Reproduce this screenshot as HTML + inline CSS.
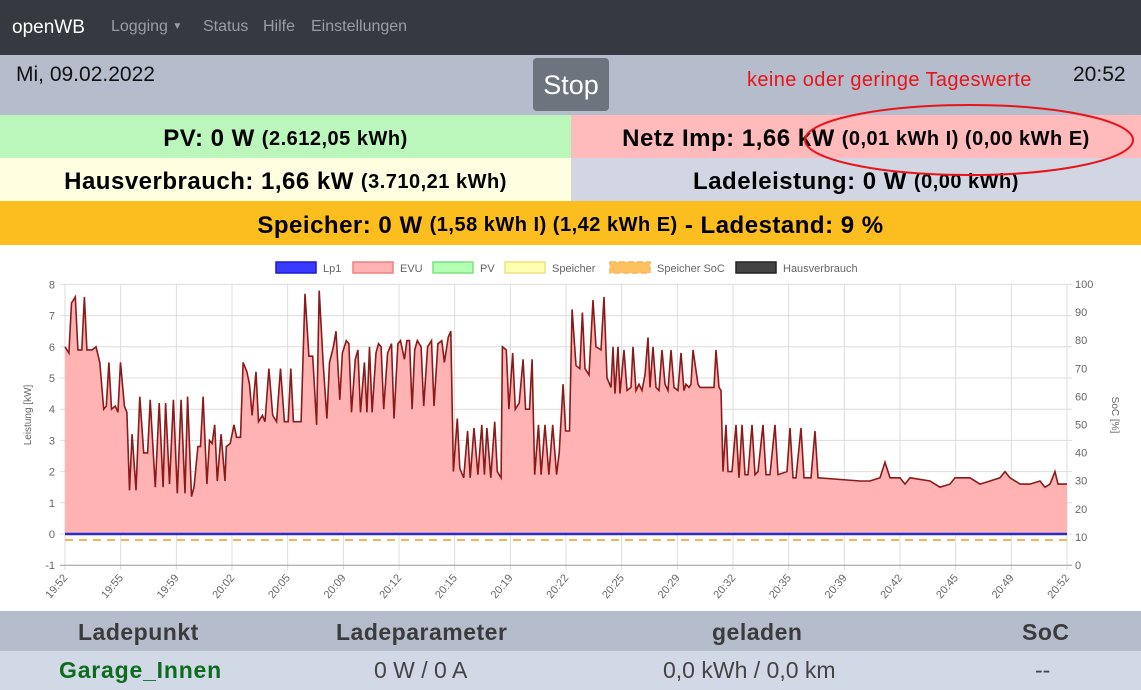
<!DOCTYPE html>
<html><head><meta charset="utf-8"><style>
*{margin:0;padding:0;box-sizing:border-box}
body{width:1141px;height:690px;overflow:hidden;font-family:"Liberation Sans",sans-serif;background:#fff;position:relative}
.nav{position:absolute;left:0;top:0;width:1141px;height:55px;background:#343a40;color:#fff}
.nav span{position:absolute;top:18px;font-size:16px}
.r{position:absolute;display:flex;align-items:center;justify-content:center;font-weight:bold;font-size:24px;letter-spacing:0.5px;color:#000;padding-top:5px}
.r small{font-size:20px;margin-left:7px}
</style></head><body>
<div class="nav">
<span style="left:12px;font-size:19px;top:17px">openWB</span>
<span style="left:111px;color:#9a9da1">Logging <span style="position:static;font-size:10px;vertical-align:2px">▼</span></span>
<span style="left:203px;color:#9a9da1">Status</span>
<span style="left:263px;color:#9a9da1">Hilfe</span>
<span style="left:311px;color:#9a9da1">Einstellungen</span>
</div>
<div style="position:absolute;left:0;top:55px;width:1141px;height:60px;background:#b5bccb"></div>
<div style="position:absolute;left:16px;top:63px;font-size:21px;color:#111">Mi, 09.02.2022</div>
<div style="position:absolute;left:533px;top:58px;width:76px;height:53px;background:#6c757d;border-radius:4px;color:#fff;font-size:27px;text-align:center;line-height:55px">Stop</div>
<div style="position:absolute;left:747px;top:69px;font-size:20px;color:#e8141b;letter-spacing:0.4px">keine oder geringe Tageswerte</div>
<div style="position:absolute;left:1073px;top:63px;font-size:21px;color:#111">20:52</div>
<div class="r" style="left:0;top:115px;width:571px;height:43px;background:#bbf7bb">PV: 0 W<small>(2.612,05 kWh)</small></div>
<div class="r" style="left:571px;top:115px;width:570px;height:43px;background:#ffbbbb">Netz Imp: 1,66 kW<small>(0,01 kWh I) (0,00 kWh E)</small></div>
<div class="r" style="left:0;top:158px;width:571px;height:43px;background:#fefee0">Hausverbrauch: 1,66 kW<small>(3.710,21 kWh)</small></div>
<div class="r" style="left:571px;top:158px;width:570px;height:43px;background:#d2d6e2">Ladeleistung: 0 W<small>(0,00 kWh)</small></div>
<div class="r" style="left:0;top:201px;width:1141px;height:44px;background:#fcbe1f">Speicher: 0 W<small>(1,58 kWh I) (1,42 kWh E)</small>&nbsp;- Ladestand: 9 %</div>
<svg style="position:absolute;left:0;top:0" width="1141" height="690">
<ellipse cx="969" cy="140" rx="164" ry="35" fill="none" stroke="#e8141b" stroke-width="2"/>
</svg>
<svg id="ch" style="position:absolute;left:0;top:245px" width="1141" height="365" font-family="Liberation Sans" font-size="11" fill="#666"></svg>
<div style="position:absolute;left:0;top:611px;width:1141px;height:40px;background:#b5bccb;font-weight:bold;font-size:23px;color:#3b3b3b;letter-spacing:0.5px">
<span style="position:absolute;left:78px;top:8px">Ladepunkt</span>
<span style="position:absolute;left:336px;top:8px">Ladeparameter</span>
<span style="position:absolute;left:712px;top:8px">geladen</span>
<span style="position:absolute;left:1022px;top:8px">SoC</span></div>
<div style="position:absolute;left:0;top:651px;width:1141px;height:39px;background:#d2d9e6;font-size:23px;color:#444">
<span style="position:absolute;left:59px;top:6px;font-weight:bold;color:#0d6b1e;letter-spacing:0.8px">Garage_Innen</span>
<span style="position:absolute;left:374px;top:6px">0 W / 0 A</span>
<span style="position:absolute;left:663px;top:6px">0,0 kWh / 0,0 km</span>
<span style="position:absolute;left:1035px;top:6px">--</span></div>
<script>
var s=document.getElementById('ch'),h='';
var X0=65,X1=1067,Y=function(v){return 289-31.2*v};
var TL=['19:52','19:55','19:59','20:02','20:05','20:09','20:12','20:15','20:19','20:22','20:25','20:29','20:32','20:35','20:39','20:42','20:45','20:49','20:52'];
for(var i=0;i<=18;i++){var x=X0+i*(X1-X0)/18;h+='<line x1="'+x+'" y1="39" x2="'+x+'" y2="325" stroke="#ddd"/>';
 h+='<text transform="translate('+(x+3)+',333) rotate(-50)" text-anchor="end">'+TL[i]+'</text>';}
for(var v=-1;v<=8;v++){var y=Y(v);h+='<line x1="60" y1="'+y+'" x2="1072" y2="'+y+'" stroke="'+(v==-1?'#999':'#ddd')+'"/><text x="55" y="'+(y+4)+'" text-anchor="end">'+v+'</text>';}
for(var k=0;k<=10;k++){var y=320-k*28.1;h+='<text x="1075" y="'+(y+4)+'">'+(k*10)+'</text>';}
var K=[[65,6],[68,5.8],[70,7.4],[73,7.6],[75,5.9],[78,5.9],[80,7.6],[82,5.9],[86,5.9],[89,6.0],[92,5.5],[95,4.0],[97,4.1],[99,5.5],[101,4.0],[104,4.1],[106,3.9],[108,5.5],[111,4.1],[113,3.9],[115,1.4],[117,3.2],[120,1.4],[123,4.4],[126,2.6],[129,2.6],[131,4.3],[135,1.5],[138,4.2],[141,1.5],[143,4.2],[146,1.6],[149,4.3],[152,1.3],[155,4.3],[158,1.3],[160,4.4],[163,1.2],[165,1.5],[168,2.8],[170,2.8],[172,4.4],[175,1.6],[177,3.0],[179,2.9],[181,3.5],[183,1.7],[186,3.2],[189,1.7],[190,2.8],[193,2.9],[196,3.5],[198,3.1],[201,3.1],[203,5.5],[206,5.2],[208,4.8],[210,3.8],[213,5.2],[215,3.6],[218,3.8],[220,3.6],[223,5.3],[226,3.8],[229,3.6],[232,5.3],[235,3.6],[238,3.6],[240,5.3],[242,3.6],[246,3.6],[248,3.6],[251,7.7],[254,5.7],[257,5.7],[260,3.5],[262,7.8],[265,5.5],[268,3.7],[270,5.5],[273,6.0],[275,6.5],[278,4.3],[280,5.8],[283,6.2],[285,6.1],[287,3.9],[290,5.6],[292,5.9],[294,3.9],[297,5.5],[299,3.9],[301,6.0],[303,3.9],[306,5.8],[308,6.1],[310,6.0],[312,4.0],[315,5.8],[318,6.1],[320,3.7],[323,6.1],[325,6.2],[328,5.6],[330,6.2],[332,6.2],[334,4.0],[336,5.9],[338,6.2],[341,6.0],[343,4.1],[346,6.0],[349,6.2],[351,4.1],[354,6.1],[357,6.2],[359,5.5],[362,6.3],[364,6.5],[366,2.0],[369,3.7],[371,2.1],[374,1.8],[377,3.3],[379,1.8],[382,3.4],[385,1.9],[388,3.5],[390,1.9],[392,3.4],[395,1.8],[398,3.6],[400,2.0],[403,1.8],[404,6.0],[407,5.9],[409,4.0],[412,5.8],[414,4.0],[417,4.2],[420,5.6],[422,4.0],[425,4.0],[427,5.6],[429,1.9],[432,3.5],[434,1.9],[437,3.5],[440,1.9],[443,3.5],[446,1.9],[448,2.6],[451,4.8],[453,3.3],[456,3.3],[458,7.2],[461,5.4],[464,5.3],[466,7.1],[468,5.3]];
var lx=K[K.length-1][0];K=K.map(function(p){return [65+(p[0]-65)*(585-65)/(lx-65),p[1]]});
var R=[[589,5.1],[593,7.5],[596,6.0],[601,5.9],[604,7.6],[607,5.0],[611,4.7],[613,6.0],[615,4.5],[618,6.0],[620,4.5],[624,5.9],[627,4.6],[631,4.7],[633,6.0],[636,4.6],[639,4.8],[642,4.6],[645,5.1],[648,6.3],[650,4.7],[653,6.0],[656,4.7],[659,4.6],[662,5.9],[665,4.8],[668,4.6],[671,5.9],[674,4.7],[678,4.6],[681,5.8],[684,4.6],[686,4.8],[689,4.7],[691,4.8],[693,5.9],[698,4.8],[700,4.7],[714,4.7],[716,5.9],[719,4.7],[721,4.6],[723,2.0],[726,3.5],[728,2.0],[732,2.0],[736,3.5],[739,1.8],[742,3.5],[745,1.9],[748,1.9],[752,3.5],[755,1.9],[758,2.0],[763,3.5],[766,1.9],[770,1.9],[775,3.5],[778,1.9],[787,2.0],[790,3.4],[793,1.8],[796,1.8],[801,3.4],[804,1.8],[811,1.8],[815,3.3],[818,1.8],[860,1.7],[870,1.7],[880,1.8],[885,2.3],[890,1.8],[900,1.8],[905,1.6],[910,1.8],[930,1.7],[940,1.5],[950,1.6],[955,1.8],[970,1.8],[980,1.6],[990,1.7],[1000,1.8],[1005,2.0],[1010,1.8],[1020,1.6],[1030,1.6],[1040,1.7],[1045,1.5],[1050,1.6],[1055,2.0],[1058,1.6],[1067,1.6]];
var P=K.concat(R);
var pts=P.map(function(p){return p[0].toFixed(1)+','+Y(p[1]).toFixed(1)}).join(' ');
h+='<polygon points="65,'+Y(0)+' '+pts+' 1067,'+Y(0)+'" fill="#ffb3b3"/>';
h+='<polyline points="'+pts+'" fill="none" stroke="#8b1a1a" stroke-width="1.6"/>';
h+='<line x1="65" y1="'+Y(0)+'" x2="1067" y2="'+Y(0)+'" stroke="#2a2ad0" stroke-width="2.5"/>';
h+='<line x1="65" y1="'+(Y(0)+6)+'" x2="1067" y2="'+(Y(0)+6)+'" stroke="#f9b45a" stroke-width="2" stroke-dasharray="8,6"/>';
h+='<text transform="translate(31,170) rotate(-90)" text-anchor="middle" font-size="10">Leistung [kW]</text>';
h+='<text transform="translate(1112,170) rotate(90)" text-anchor="middle" font-size="10">SoC [%]</text>';
var lg=[[276,'#3a3aff','#1a1ad0','Lp1',0],[353,'#ffb3b3','#f08080','EVU',0],[433,'#b3ffb3','#80e080','PV',0],[505,'#ffffb3','#f0e080','Speicher',0],[610,'#ffc060','#f9b45a','Speicher SoC',1],[736,'#444','#222','Hausverbrauch',0]];
lg.forEach(function(l){h+='<rect x="'+l[0]+'" y="17" width="40" height="11" fill="'+l[1]+'" stroke="'+l[2]+'" stroke-width="1.5"'+(l[4]?' stroke-dasharray="6,3"':'')+'/><text x="'+(l[0]+47)+'" y="27">'+l[3]+'</text>';});
s.innerHTML=h;
</script>
</body></html>
